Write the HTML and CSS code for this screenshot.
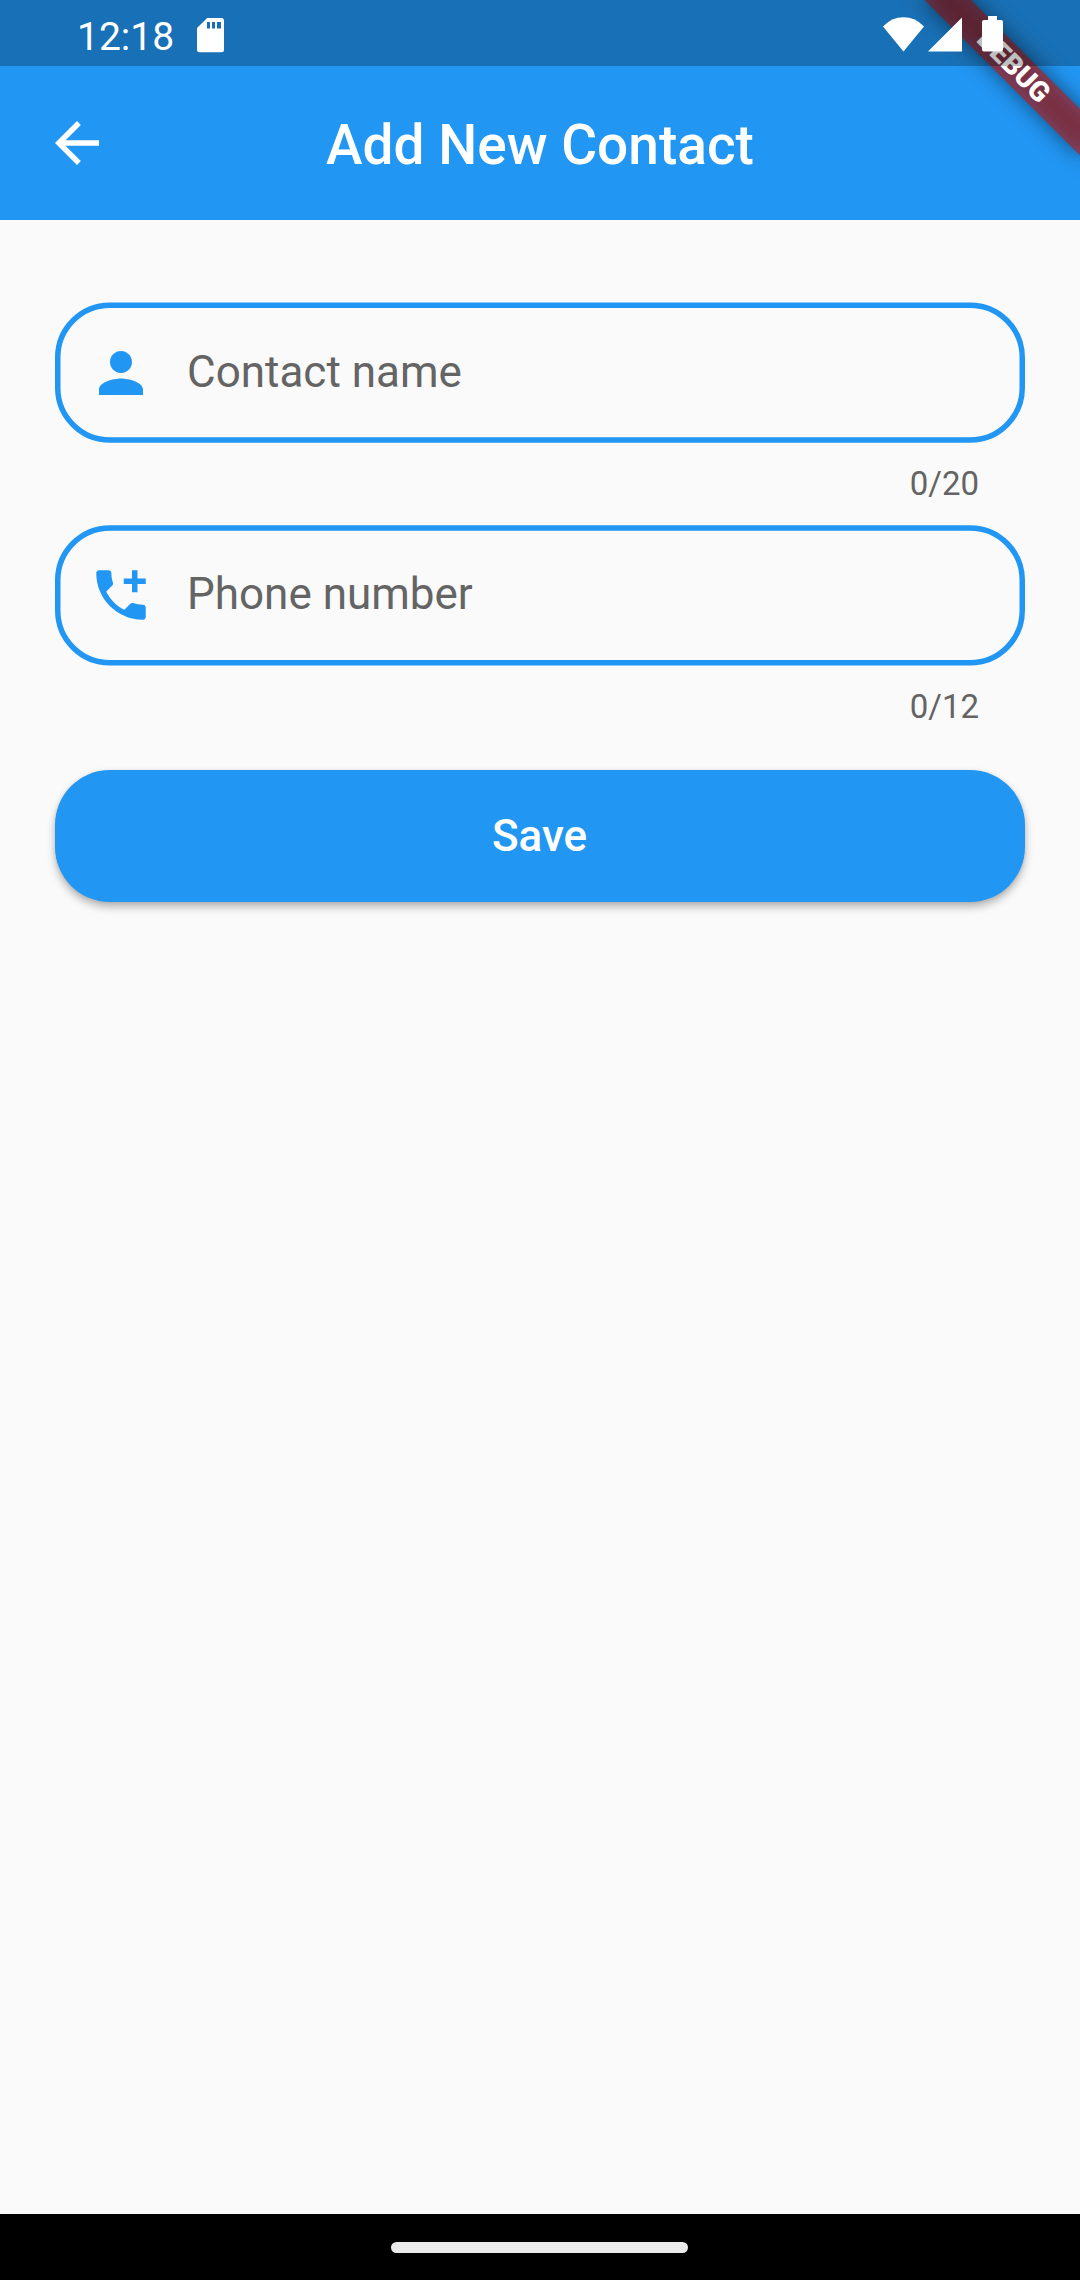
FILE: index.html
```html
<!DOCTYPE html>
<html lang="en">
<head>
<meta charset="utf-8">
<title>Add New Contact</title>
<link rel="stylesheet" href="styles.css">
</head>
<body>
<div class="screen">
  <header class="header">
    <div class="status-bar">
      <div class="status-left">
        <span class="clock">12:18</span>
        <svg class="sd-icon" width="27" height="35" viewBox="0 0 27 35"><path fill-rule="evenodd" d="M10.2 0H24.500Q27 0 27 2.500V31.800Q27 34.300 24.500 34.300H2.500Q0 34.300 0 31.800V10ZM10 4v6.500h3V4zM15 4v6.500h3V4zM20 4v6.500h4V4z"/></svg>
      </div>
      <div class="status-right">
        <svg width="41" height="35" viewBox="0 0 41 35"><path d="M20.500 34.500 0 9.500Q8.500 .3 20.500 .3T41 9.500Z"/></svg>
        <svg width="34" height="35" viewBox="0 0 34 35"><path d="M34 .5V34.600H0Z"/></svg>
        <svg class="battery" width="21" height="36" viewBox="0 0 21 36"><path d="M6 0h9v4h4q2 0 2 2v27.600q0 2-2 2H2q-2 0-2-2V6q0-2 2-2h4z"/></svg>
      </div>
    </div>
    <div class="app-bar">
      <svg class="icon" viewBox="0 0 24 24"><path d="M20 11H7.830l5.590-5.590L12 4l-8 8 8 8 1.410-1.410L7.830 13H20z"/></svg>
      <h1 class="title">Add New Contact</h1>
    </div>
    <div class="banner"><span class="banner-label">DEBUG</span></div>
  </header>
  <main class="form">
    <div class="field">
      <svg class="frame" viewBox="0 0 970 141"><rect x="2.750" y="3.250" width="964.500" height="134.750" rx="52.250"/></svg>
      <div class="field-content">
        <svg class="icon" viewBox="0 0 24 24"><path d="M12 12c2.210 0 4-1.790 4-4s-1.790-4-4-4-4 1.790-4 4 1.790 4 4 4zm0 2c-2.670 0-8 1.340-8 4v2h16v-2c0-2.660-5.330-4-8-4z"/></svg>
        <span class="hint">Contact name</span>
      </div>
    </div>
    <div class="counter">0/20</div>
    <div class="field">
      <svg class="frame" viewBox="0 0 970 141"><rect x="2.750" y="3" width="964.500" height="134.750" rx="52.250"/></svg>
      <div class="field-content phone">
        <svg class="icon" viewBox="0 0 24 24"><path d="M20 15.500c-1.250 0-2.450-.2-3.570-.57-.35-.11-.74-.03-1.020.24l-2.200 2.200c-2.830-1.440-5.150-3.750-6.590-6.590l2.200-2.210c.28-.26.36-.65.25-1C8.700 6.450 8.500 5.250 8.500 4c0-.55-.45-1-1-1H4c-.55 0-1 .45-1 1 0 9.390 7.610 17 17 17 .55 0 1-.45 1-1v-3.500c0-.55-.45-1-1-1zM21 6h-3V3h-2v3h-3v2h3v3h2V8h3z"/></svg>
        <span class="hint">Phone number</span>
      </div>
    </div>
    <div class="counter">0/12</div>
    <button class="save">Save</button>
  </main>
  <footer class="nav-bar"><div class="handle"></div></footer>
</div>
</body>
</html>
```
FILE: styles.css
```css
* { box-sizing: border-box; }
body { margin: 0; font-family: Roboto, "Noto Sans", sans-serif; }
.screen { width: 1080px; height: 2280px; display: flex; flex-direction: column; background: #fafafa; overflow: hidden; }
svg { display: block; flex: none; }
.icon { width: 66px; height: 66px; fill: currentColor; }

.header { position: relative; height: 220px; background: #2196f3; color: #fff; overflow: hidden; }
.status-bar { position: relative; z-index: 2; height: 66px; padding: 0 77px; display: flex; justify-content: space-between; background: rgba(0, 0, 0, .25); fill: #fff; }
.status-left { display: flex; }
.clock { font-size: 39px; line-height: 74px; }
.sd-icon { margin: 18px 0 0 23px; }
.status-right { display: flex; gap: 4px; padding-top: 17px; }
.battery { margin: -1px 0 0 16px; }
.app-bar { height: 154px; padding: 0 44px; display: grid; grid-template-columns: 66px 1fr 66px; align-items: center; }
.title { margin: 0; padding-top: 3px; text-align: center; font-size: 55px; font-weight: 500; line-height: 64px; }

.banner { position: absolute; z-index: 1; left: 970px; top: 77px; width: 220px; height: 33px; transform-origin: 110px -77px; transform: rotate(45deg); }
.banner::before { content: ""; position: absolute; inset: 0; background: rgba(0, 0, 0, .5); filter: blur(10.9px); }
.banner-label { position: relative; display: block; background: rgba(183, 28, 28, .627); text-align: center; font-size: 28.05px; font-weight: 900; line-height: 33px; }

.form { flex: 1; padding: 82px 55px 0; display: flex; flex-direction: column; }
.field { height: 141px; display: grid; }
.frame, .field-content { grid-area: 1 / 1; }
.frame { width: 970px; height: 141px; fill: none; stroke: #2196f3; stroke-width: 5.5px; }
.field-content { display: flex; align-items: center; gap: 33px; padding: 1px 33px 0; color: #2196f3; }
.phone { padding: 0 33px 1px; }
.hint { padding-bottom: 3px; color: #646464; font-size: 44px; line-height: 52px; }
.counter { height: 82px; padding: 21px 46px 0; text-align: right; color: #646464; font-size: 33px; line-height: 39px; }
.save { margin-top: 22px; height: 132px; border: 0; padding: 0 1px 0 0; border-radius: 55px; background: #2196f3; color: #fff; font: 500 44px/52px Roboto, sans-serif; box-shadow: 0 5px 8px rgba(0, 0, 0, .27), 0 1px 4px rgba(0, 0, 0, .08); }

.nav-bar { height: 66px; padding-right: 1px; background: #000; display: flex; justify-content: center; align-items: center; }
.handle { width: 297px; height: 11px; border-radius: 6px; background: #ebebeb; }
```
